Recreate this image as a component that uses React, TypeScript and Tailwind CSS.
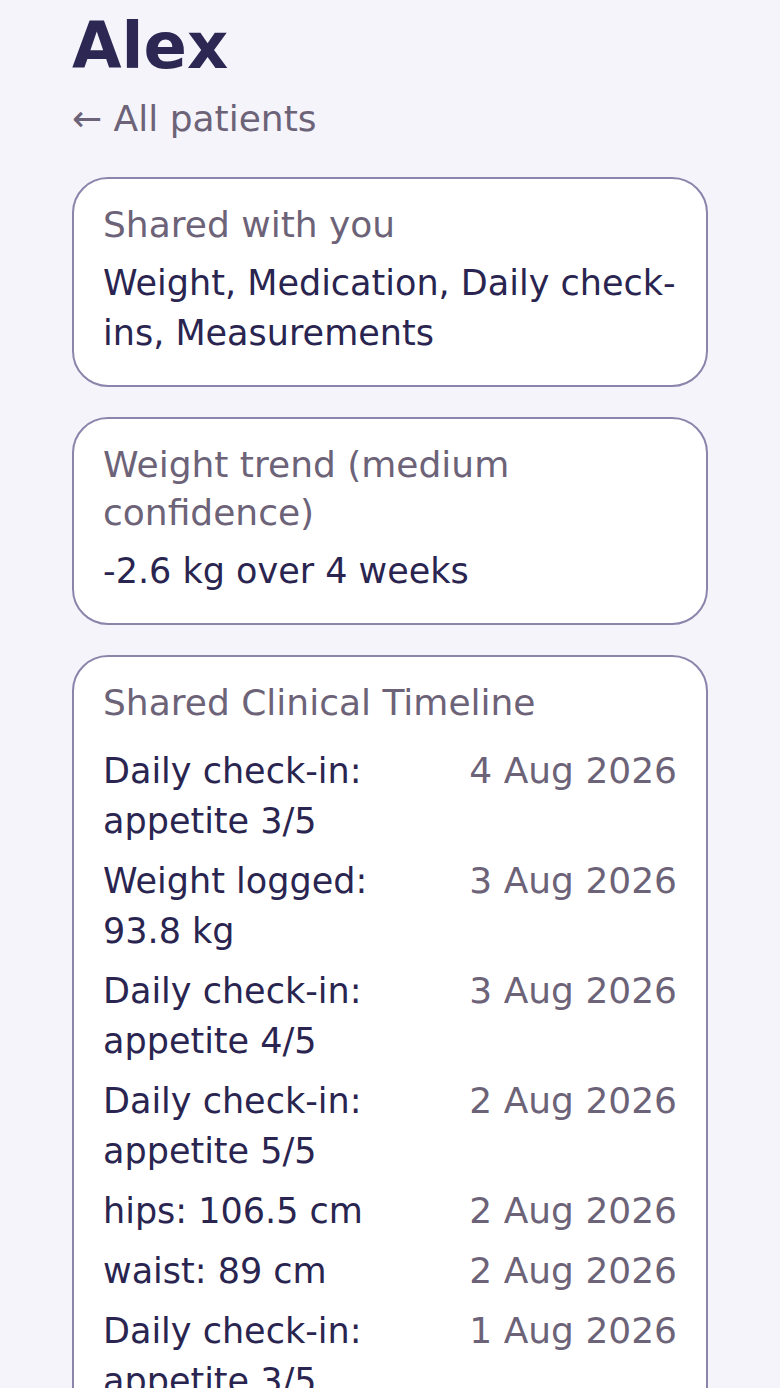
const timeline = [
  { text: "Daily check-in: appetite 3/5", date: "4 Aug 2026" },
  { text: "Weight logged: 93.8 kg", date: "3 Aug 2026" },
  { text: "Daily check-in: appetite 4/5", date: "3 Aug 2026" },
  { text: "Daily check-in: appetite 5/5", date: "2 Aug 2026" },
  { text: "hips: 106.5 cm", date: "2 Aug 2026" },
  { text: "waist: 89 cm", date: "2 Aug 2026" },
  { text: "Daily check-in: appetite 3/5", date: "1 Aug 2026" },
  { text: "Weight logged: 94.4 kg", date: "1 Aug 2026" },
];

function Card({ children }: { children: React.ReactNode }) {
  return (
    <section className="rounded-[36px] border-2 border-[#8b84ab] bg-white px-[29px] pt-[22px] pb-[27px]">
      {children}
    </section>
  );
}

export default function App() {
  return (
    <div className="min-h-screen bg-[#f5f4fa] px-[72px] font-['DejaVu_Sans',sans-serif] text-[#2a2550]">
      <h1 className="text-[64px] font-bold leading-[92px] text-[#2c2753]">Alex</h1>
      <a href="#" className="mt-[2px] block text-[36px] leading-[50px] text-[#6d6378]">
        ← All patients
      </a>

      <div className="mt-[33px] flex flex-col gap-[30px]">
        <Card>
          <p className="text-[36px] leading-[48px] text-[#6d6378]">Shared with you</p>
          <p className="mt-[9px] text-[35px] leading-[50px]">
            Weight, Medication, Daily check-ins, Measurements
          </p>
        </Card>

        <Card>
          <p className="text-[36px] leading-[48px] text-[#6d6378]">
            Weight trend (medium confidence)
          </p>
          <p className="mt-[9px] text-[35px] leading-[50px]">-2.6 kg over 4 weeks</p>
        </Card>

        <Card>
          <p className="text-[36px] leading-[48px] text-[#6d6378]">Shared Clinical Timeline</p>
          <ul className="mt-[19px] flex flex-col gap-[10px]">
            {timeline.map((item, i) => (
              <li key={i} className="flex justify-between gap-6 text-[35px] leading-[50px]">
                <span>{item.text}</span>
                <span className="shrink-0 text-[36px] text-[#6d6378]">{item.date}</span>
              </li>
            ))}
          </ul>
        </Card>
      </div>
    </div>
  );
}
